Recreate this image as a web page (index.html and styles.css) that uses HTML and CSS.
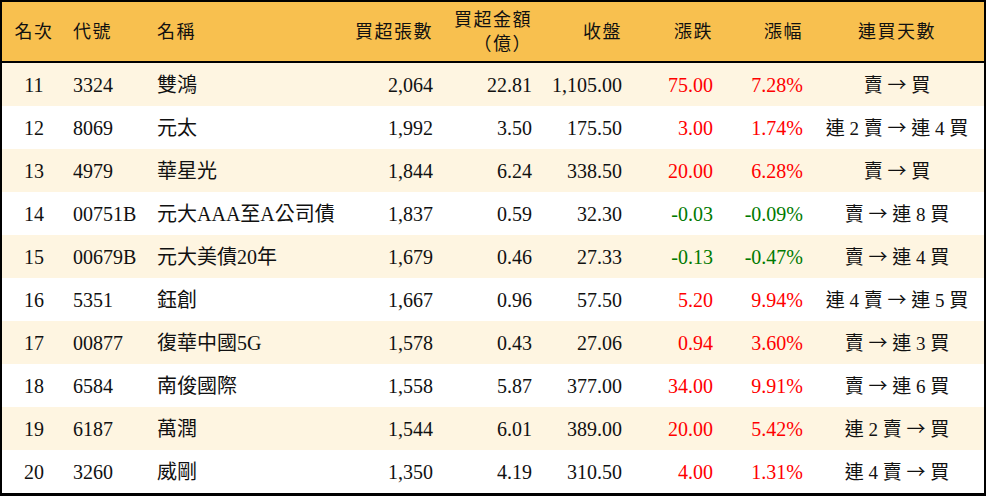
FILE: index.html
```html
<!DOCTYPE html>
<html lang="zh-Hant">
<head>
<meta charset="utf-8">
<title>買超排行</title>
<link rel="stylesheet" href="styles.css">
</head>
<body>
<div class="wrap">
<table class="rank">
<colgroup>
<col class="c1"><col class="c2"><col class="c3"><col class="c4"><col class="c5"><col class="c6"><col class="c7"><col class="c8"><col class="c9">
</colgroup>
<thead>
<tr>
<th class="ctr">名次</th>
<th class="lft">代號</th>
<th class="lft">名稱</th>
<th class="rgt">買超張數</th>
<th class="rgt two">買超金額<br>（億）</th>
<th class="rgt">收盤</th>
<th class="rgt">漲跌</th>
<th class="rgt">漲幅</th>
<th class="ctr">連買天數</th>
</tr>
</thead>
<tbody>
<tr class="odd"><td class="ctr">11</td><td class="lft">3324</td><td class="lft">雙鴻</td><td class="rgt">2,064</td><td class="rgt">22.81</td><td class="rgt">1,105.00</td><td class="rgt up">75.00</td><td class="rgt up">7.28%</td><td class="ctr days">賣 <span class="arr">→</span> 買</td></tr>
<tr><td class="ctr">12</td><td class="lft">8069</td><td class="lft">元太</td><td class="rgt">1,992</td><td class="rgt">3.50</td><td class="rgt">175.50</td><td class="rgt up">3.00</td><td class="rgt up">1.74%</td><td class="ctr days">連 2 賣 <span class="arr">→</span> 連 4 買</td></tr>
<tr class="odd"><td class="ctr">13</td><td class="lft">4979</td><td class="lft">華星光</td><td class="rgt">1,844</td><td class="rgt">6.24</td><td class="rgt">338.50</td><td class="rgt up">20.00</td><td class="rgt up">6.28%</td><td class="ctr days">賣 <span class="arr">→</span> 買</td></tr>
<tr><td class="ctr">14</td><td class="lft">00751B</td><td class="lft">元大AAA至A公司債</td><td class="rgt">1,837</td><td class="rgt">0.59</td><td class="rgt">32.30</td><td class="rgt down">-0.03</td><td class="rgt down">-0.09%</td><td class="ctr days">賣 <span class="arr">→</span> 連 8 買</td></tr>
<tr class="odd"><td class="ctr">15</td><td class="lft">00679B</td><td class="lft">元大美債20年</td><td class="rgt">1,679</td><td class="rgt">0.46</td><td class="rgt">27.33</td><td class="rgt down">-0.13</td><td class="rgt down">-0.47%</td><td class="ctr days">賣 <span class="arr">→</span> 連 4 買</td></tr>
<tr><td class="ctr">16</td><td class="lft">5351</td><td class="lft">鈺創</td><td class="rgt">1,667</td><td class="rgt">0.96</td><td class="rgt">57.50</td><td class="rgt up">5.20</td><td class="rgt up">9.94%</td><td class="ctr days">連 4 賣 <span class="arr">→</span> 連 5 買</td></tr>
<tr class="odd"><td class="ctr">17</td><td class="lft">00877</td><td class="lft">復華中國5G</td><td class="rgt">1,578</td><td class="rgt">0.43</td><td class="rgt">27.06</td><td class="rgt up">0.94</td><td class="rgt up">3.60%</td><td class="ctr days">賣 <span class="arr">→</span> 連 3 買</td></tr>
<tr><td class="ctr">18</td><td class="lft">6584</td><td class="lft">南俊國際</td><td class="rgt">1,558</td><td class="rgt">5.87</td><td class="rgt">377.00</td><td class="rgt up">34.00</td><td class="rgt up">9.91%</td><td class="ctr days">賣 <span class="arr">→</span> 連 6 買</td></tr>
<tr class="odd"><td class="ctr">19</td><td class="lft">6187</td><td class="lft">萬潤</td><td class="rgt">1,544</td><td class="rgt">6.01</td><td class="rgt">389.00</td><td class="rgt up">20.00</td><td class="rgt up">5.42%</td><td class="ctr days">連 2 賣 <span class="arr">→</span> 買</td></tr>
<tr><td class="ctr">20</td><td class="lft">3260</td><td class="lft">威剛</td><td class="rgt">1,350</td><td class="rgt">4.19</td><td class="rgt">310.50</td><td class="rgt up">4.00</td><td class="rgt up">1.31%</td><td class="ctr days">連 4 賣 <span class="arr">→</span> 買</td></tr>
</tbody>
</table>
</div>
</body>
</html>
```
FILE: styles.css
```css
html, body {
  margin: 0;
  padding: 0;
  background: #ffffff;
}
body {
  font-family: "Liberation Serif", "Noto Sans CJK TC", serif;
  color: #111111;
}
.wrap {
  width: 982px;
  border: 2px solid #000000;
  border-bottom-width: 3px;
}
.rank {
  width: 982px;
  table-layout: fixed;
  border-collapse: separate;
  border-spacing: 0;
}
.c1 { width: 64px; }
.c2 { width: 84px; }
.c3 { width: 190px; }
.c4 { width: 100px; }
.c5 { width: 99px; }
.c6 { width: 90px; }
.c7 { width: 91px; }
.c8 { width: 90px; }
.c9 { width: 174px; }
.rank th,
.rank td {
  padding: 0 7px;
  white-space: nowrap;
  overflow: visible;
}
.rank th {
  height: 59px;
  background: #f8c04f;
  border-bottom: 2px solid #000000;
  font-size: 18px;
  letter-spacing: 1.5px;
  font-weight: 400;
  line-height: 24px;
  vertical-align: middle;
}
.rank td {
  height: 43px;
  font-size: 20px;
  line-height: 24px;
  vertical-align: middle;
}
.rank td.days {
  font-size: 19px;
}
.rank tr.odd td {
  background: #fef5e1;
}
.arr {
  font-family: "Noto Sans CJK TC", sans-serif;
  font-size: 19px;
}
.ctr { text-align: center; }
.lft { text-align: left; }
.rgt { text-align: right; }
.up { color: #ff0000; }
.down { color: #007a00; }
```
